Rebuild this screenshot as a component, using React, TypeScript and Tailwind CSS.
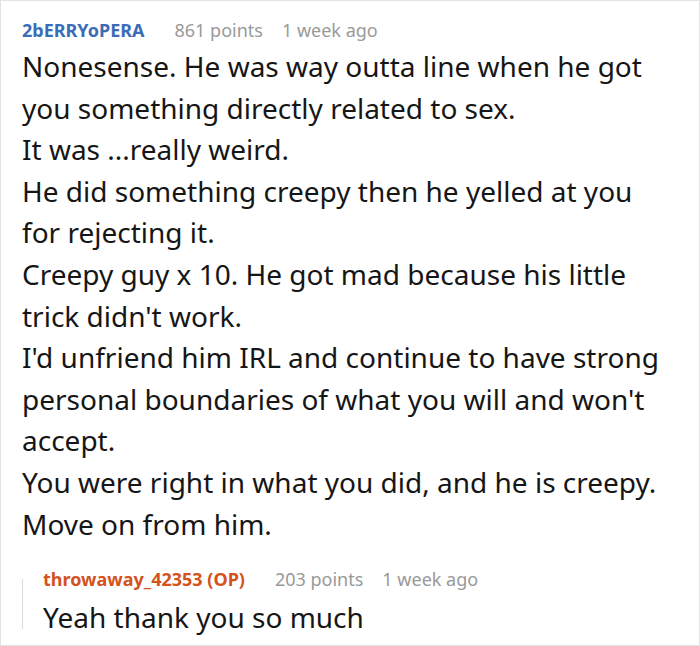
const font = { fontFamily: '"Noto Sans", "Open Sans", sans-serif' };

function CommentMeta(props: { author: string; points: number; age: string; op?: boolean }) {
  return (
    <div className="flex items-baseline text-[18px] leading-[24px]">
      <span className={props.op ? "font-bold text-[#d4521c]" : "font-bold text-[#3b6cb7]"}>
        {props.author}
      </span>
      <span className="ml-[30px] text-[#999999]">{props.points} points</span>
      <span className="ml-[19px] text-[#999999]">{props.age}</span>
    </div>
  );
}

const lines = [
  "Nonesense. He was way outta line when he got you something directly related to sex.",
  "It was ...really weird.",
  "He did something creepy then he yelled at you for rejecting it.",
  "Creepy guy x 10. He got mad because his little trick didn't work.",
  "I'd unfriend him IRL and continue to have strong personal boundaries of what you will and won't accept.",
  "You were right in what you did, and he is creepy.",
  "Move on from him."
];

export default function App() {
  return (
    <div
      className="box-border h-[646px] w-[700px] border border-[#e3e3e3] bg-white pl-[21px] pr-[29px] pt-[17px] text-[#161616]"
      style={font}
    >
      <CommentMeta author="2bERRYoPERA" points={861} age="1 week ago" />
      <div className="mt-[4px] text-[28px] leading-[41.6px]">
        {lines.map((line) => (
          <p key={line}>{line}</p>
        ))}
      </div>
      <div className="mt-[22px] flex">
        <div className="mb-[10px] mt-[12px] w-px bg-[#dddddd]" />
        <div className="pl-[20px]">
          <CommentMeta author="throwaway_42353 (OP)" points={203} age="1 week ago" op />
          <p className="mt-[6px] text-[28px] leading-[41.6px]">Yeah thank you so much</p>
        </div>
      </div>
    </div>
  );
}
